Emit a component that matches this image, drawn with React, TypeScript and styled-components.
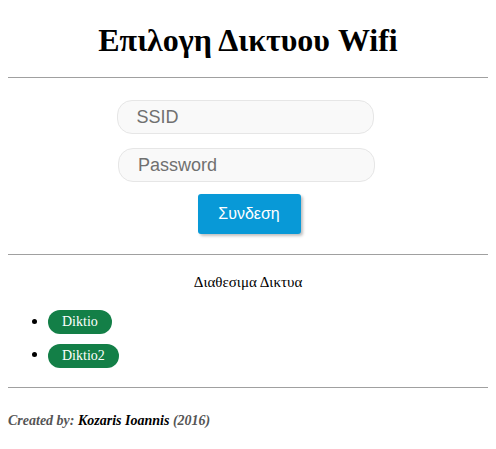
import React from "react";
import styled, { createGlobalStyle } from "styled-components";

const GlobalStyle = createGlobalStyle`
  body {
    margin: 8px;
    font-family: "Liberation Serif", "Times New Roman", serif;
    background: #fff;
    color: #000;
  }
`;

const Title = styled.h1`
  font-size: 32px;
  font-weight: 700;
  text-align: center;
  margin: 0;
  padding-top: 14px;
  line-height: 37px;
`;

const Rule = styled.hr<{ $top: number }>`
  border: none;
  border-top: 1px solid #a0a0a0;
  height: 0;
  margin: ${(p) => p.$top}px 0 0;
`;

const Form = styled.form`
  display: flex;
  flex-direction: column;
  align-items: center;
  padding-top: 22px;
`;

const Field = styled.input<{ $shift?: number }>`
  box-sizing: border-box;
  width: 257px;
  height: 34px;
  margin: 0 0 14px ${(p) => p.$shift ?? 0}px;
  padding: 0 0 0 19px;
  border: 1px solid #e6e6e6;
  border-radius: 15px;
  background: #f9f9f9;
  font-family: "Liberation Sans", Arial, sans-serif;
  font-size: 18px;
  color: #555;
  outline: none;
  &::placeholder {
    color: #707070;
  }
`;

const Submit = styled.button`
  width: 103px;
  height: 40px;
  margin: -2px 0 0 2px;
  border: none;
  border-radius: 3px;
  background: #0899d7;
  color: #fff;
  font-family: "Liberation Sans", Arial, sans-serif;
  font-size: 16px;
  box-shadow: 2px 2px 3px rgba(0, 0, 0, 0.25);
  cursor: pointer;
`;

const Subtitle = styled.p`
  text-align: center;
  font-size: 15px;
  margin: 19px 0 0;
`;

const NetList = styled.ul`
  margin: 18px 0 0;
  padding-left: 40px;
  list-style: disc;
`;

const NetItem = styled.li`
  margin-bottom: 8px;
  line-height: 24px;
`;

const NetButton = styled.button`
  height: 24px;
  padding: 0 14px;
  border: none;
  border-radius: 12px;
  background: #137f47;
  color: #fff;
  font-family: "Liberation Serif", "Times New Roman", serif;
  font-size: 14px;
  vertical-align: middle;
  cursor: pointer;
`;

const Footer = styled.p`
  margin: 25px 0 0;
  font-size: 14px;
  font-style: italic;
  font-weight: 700;
  color: #555;
`;

const Author = styled.span`
  color: #000;
`;

const networks = ["Diktio", "Diktio2"];

export default function App() {
  return (
    <>
      <GlobalStyle />
      <Title>Επιλογη Δικτυου Wifi</Title>
      <Rule $top={18} />
      <Form onSubmit={(e) => e.preventDefault()}>
        <Field placeholder="SSID" $shift={-6} />
        <Field placeholder="Password" type="password" $shift={-3} />
        <Submit type="submit">Συνδεση</Submit>
      </Form>
      <Rule $top={20} />
      <Subtitle>Διαθεσιμα Δικτυα</Subtitle>
      <NetList>
        {networks.map((n) => (
          <NetItem key={n}>
            <NetButton>{n}</NetButton>
          </NetItem>
        ))}
      </NetList>
      <Rule $top={19} />
      <Footer>
        Created by: <Author>Kozaris Ioannis</Author> (2016)
      </Footer>
    </>
  );
}
